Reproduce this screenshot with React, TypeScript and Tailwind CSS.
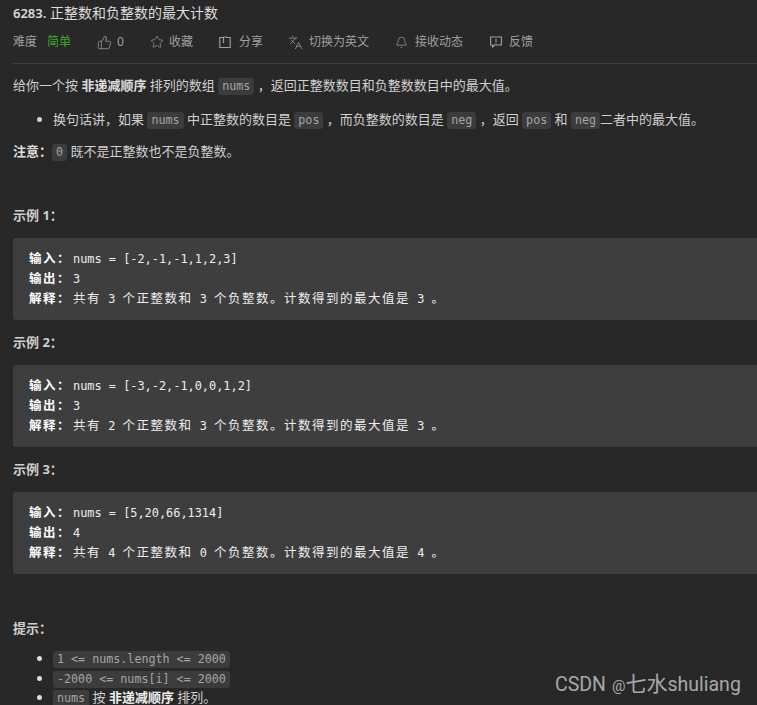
import { Bell, Languages, Star, ThumbsUp } from 'lucide-react';
import type { ReactNode } from 'react';

const Code = ({ children }: { children: ReactNode }) => (
  <code className="inline-block h-[17px] bg-[#3c3c3c] text-[#a5a5a5] rounded-[3px] px-[4px] text-[11.7px] leading-[17px] font-['DejaVu_Sans_Mono','Noto_Sans_CJK_SC',monospace] align-middle">
    {children}
  </code>
);

const Cn = ({ children }: { children: ReactNode }) => (
  <span className="text-[12.5px] tracking-[1.5px] font-['Noto_Sans_CJK_SC',sans-serif]">{children}</span>
);

const Label = ({ children }: { children: ReactNode }) => (
  <span className="mr-[2px] text-[12.5px] tracking-[1.5px] font-bold text-white font-['Noto_Sans_CJK_SC',sans-serif]">{children}</span>
);

const Example = ({ title, input, output, a, b }: { title: string; input: string; output: string; a: string; b: string }) => (
  <div>
    <p className="h-[20px] leading-[20px] text-[13px] font-bold text-[#cfcfcf]">{title}</p>
    <pre className="mt-[13px] h-[82px] bg-[#3e3e3e] rounded-l-[3px] pl-[16px] pt-[10px] text-[11.9px] leading-[20px] text-[#eeeeee] font-['DejaVu_Sans_Mono',monospace] overflow-hidden">
      <div className="h-[20px]"><Label>输入：</Label>{input}</div>
      <div className="h-[20px]"><Label>输出：</Label>{output}</div>
      <div className="h-[20px]">
        <Label>解释：</Label>
        <Cn>共有</Cn> {a} <Cn>个正整数和</Cn> {b} <Cn>个负整数。计数得到的最大值是</Cn> {output} <Cn>。</Cn>
      </div>
    </pre>
  </div>
);

const Meta = ({ icon, children, className }: { icon: ReactNode; children: ReactNode; className: string }) => (
  <div className={`flex items-center ${className}`}>
    {icon}
    <span>{children}</span>
  </div>
);

export default function App() {
  return (
    <div className="w-[757px] h-[705px] overflow-hidden relative bg-[#282828] pl-[13px] text-[13px] text-[#d0d0d0] font-['Noto_Sans','Noto_Sans_CJK_SC',sans-serif]">
      <h1 className="pt-[3px] h-[24px] leading-[20px] text-[14px] font-normal text-[#dcdcdc]">
        <span className="text-[13px] font-semibold">6283.</span> 正整数和负整数的最大计数
      </h1>

      <div className="mt-[7px] h-[22px] flex items-center text-[12px] text-[#a0a0a0]">
        <span>难度</span>
        <span className="ml-[10px] text-[#3fa52f]">简单</span>
        <Meta className="ml-[26px] gap-[5px]" icon={<ThumbsUp size={15} strokeWidth={1.2} />}>0</Meta>
        <Meta className="ml-[26px] gap-[5px]" icon={<Star size={14} strokeWidth={1.2} />}>收藏</Meta>
        <Meta
          className="ml-[26px] gap-[8px]"
          icon={
            <svg width="12" height="12" viewBox="0 0 12 12" fill="none" stroke="currentColor" strokeWidth="1.1">
              <path d="M4.5 1.5H.8v10h10.4v-10H7.5" />
              <path d="M4.5 1H8M4.5 1v6" />
            </svg>
          }
        >
          分享
        </Meta>
        <Meta className="ml-[25px] gap-[6px]" icon={<Languages size={15} strokeWidth={1.2} />}>切换为英文</Meta>
        <Meta className="ml-[26px] gap-[7px]" icon={<Bell size={13} strokeWidth={1.3} />}>接收动态</Meta>
        <Meta
          className="ml-[27px] gap-[7px]"
          icon={
            <svg width="12" height="12" viewBox="0 0 12 12" fill="none" stroke="currentColor" strokeWidth="1.1">
              <path d="M.6 1h10.8v8H4.5L2.6 11V9H.6z" />
              <path d="M6 3v3M6 6.8v.9" />
            </svg>
          }
        >
          反馈
        </Meta>
      </div>

      <div className="mt-[10px] border-t border-[#3f3f3f]" />

      <p className="mt-[9px] h-[24px] leading-[24px]">
        给你一个按 <strong className="text-[#dedede]">非递减顺序</strong> 排列的数组 <Code>nums</Code> ，返回正整数数目和负整数数目中的最大值。
      </p>

      <ul className="mt-[10px] list-disc pl-[40px]">
        <li className="h-[24px] leading-[24px]">
          换句话讲，如果 <Code>nums</Code> 中正整数的数目是 <Code>pos</Code> ，而负整数的数目是 <Code>neg</Code> ，返回 <Code>pos</Code> 和 <Code>neg</Code>二者中的最大值。
        </li>
      </ul>

      <p className="mt-[8px] h-[24px] leading-[24px]">
        <strong className="text-[#dedede]">注意：</strong><Code>0</Code> 既不是正整数也不是负整数。
      </p>

      <div className="mt-[42px] flex flex-col gap-[12px]">
        <Example title="示例 1：" input="nums = [-2,-1,-1,1,2,3]" output="3" a="3" b="3" />
        <Example title="示例 2：" input="nums = [-3,-2,-1,0,0,1,2]" output="3" a="2" b="3" />
        <Example title="示例 3：" input="nums = [5,20,66,1314]" output="4" a="4" b="0" />
      </div>

      <p className="mt-[44px] h-[20px] leading-[20px] font-bold text-[#cfcfcf]">提示：</p>

      <ul className="mt-[11px] list-disc pl-[40px] flex flex-col gap-[2px] marker:text-[#dddddd]">
        <li className="h-[18px] leading-[18px]"><Code>1 &lt;= nums.length &lt;= 2000</Code></li>
        <li className="h-[18px] leading-[18px]"><Code>-2000 &lt;= nums[i] &lt;= 2000</Code></li>
        <li className="h-[18px] leading-[18px] -mt-[1px]">
          <Code>nums</Code> 按 <strong className="text-[#eeeeee]">非递减顺序</strong> 排列。
        </li>
      </ul>

      <div className="absolute left-[555px] top-[671px] flex items-baseline text-[19.5px] leading-[26px] text-[#a8a8a8] font-['Roboto','Noto_Sans_CJK_SC',sans-serif]">
        <span>CSDN</span>
        <span className="ml-[6px] text-[15px]">@</span>
        <span className="text-[21px]">七水</span>
        <span>shuliang</span>
      </div>
    </div>
  );
}
